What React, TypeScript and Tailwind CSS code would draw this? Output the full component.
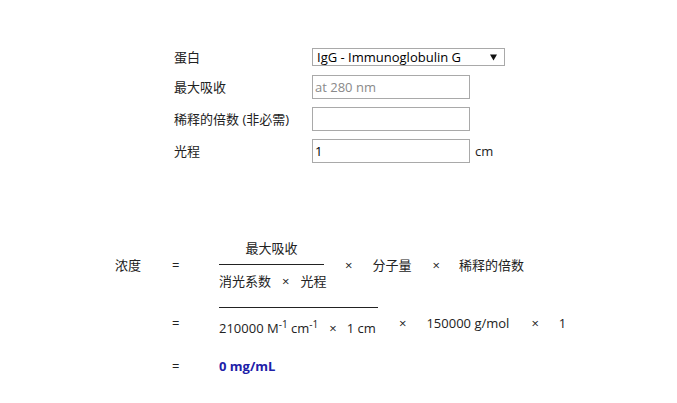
import React from "react";

export default function App() {
  return (
    <div className="w-[677px] h-[403px] bg-white font-['Open_Sans','Noto_Sans_CJK_SC',sans-serif] text-[13px] leading-[18px] text-[#222]">
      <div className="pt-[43px] pl-[174px]">
        <div className="flex items-center h-[28px]">
          <div className="w-[138px]">蛋白</div>
          <div className="w-[193px] h-[18px] border border-[#a9a9a9] flex items-center justify-between pl-[4px] pr-[7px] text-black">
            <span>IgG - Immunoglobulin G</span>
            <svg width="7" height="7" viewBox="0 0 7 7" className="block">
              <polygon points="0,0.5 7,0.5 3.5,6.5" fill="#111" />
            </svg>
          </div>
        </div>
        <div className="flex items-center h-[32px]">
          <div className="w-[138px]">最大吸收</div>
          <input
            readOnly
            placeholder="at 280 nm"
            className="w-[158px] h-[24px] border border-[#a9a9a9] px-[2px] text-[13px] placeholder:text-[#8a8a8a] outline-none"
          />
        </div>
        <div className="flex items-center h-[32px]">
          <div className="w-[138px]">稀释的倍数 (非必需)</div>
          <input
            readOnly
            className="w-[158px] h-[24px] border border-[#a9a9a9] px-[2px] text-[13px] outline-none"
          />
        </div>
        <div className="flex items-center h-[32px]">
          <div className="w-[138px]">光程</div>
          <input
            readOnly
            value="1"
            className="w-[158px] h-[24px] border border-[#a9a9a9] px-[2px] text-[13px] text-black outline-none"
          />
          <span className="ml-[5px]">cm</span>
        </div>
      </div>

      <div className="mt-[72px] pl-[115px]">
        <div className="flex items-center">
          <div className="w-[57px]">浓度</div>
          <div className="w-[47px]">=</div>
          <div className="w-[105px] flex flex-col">
            <div className="h-[18px] text-center">最大吸收</div>
            <div className="mt-[7px] border-t border-[#222]" />
            <div className="mt-[7px] h-[18px] flex whitespace-nowrap">
              <span>消光系数</span>
              <span className="mx-[11px]">×</span>
              <span>光程</span>
            </div>
          </div>
          <span className="ml-[21px]">×</span>
          <span className="ml-[20px]">分子量</span>
          <span className="ml-[21px]">×</span>
          <span className="ml-[19px]">稀释的倍数</span>
        </div>

        <div className="flex items-start mt-[17px]">
          <div className="w-[57px]" />
          <div className="w-[47px] mt-[7px]">=</div>
          <div className="w-[159px] border-t border-[#222] pt-[11px] whitespace-nowrap flex">
            <span>
              210000 M<sup className="text-[10px]">-1</sup> cm<sup className="text-[10px]">-1</sup>
            </span>
            <span className="ml-[11px] mr-[10px]">×</span>
            <span>1 cm</span>
          </div>
          <span className="ml-[21px] mt-[7px]">×</span>
          <span className="ml-[20px] mt-[7px]">150000 g/mol</span>
          <span className="ml-[22px] mt-[7px]">×</span>
          <span className="ml-[20px] mt-[7px]">1</span>
        </div>

        <div className="flex items-center mt-[20px]">
          <div className="w-[57px]" />
          <div className="w-[47px]">=</div>
          <div className="font-bold text-[#2020a8]">0 mg/mL</div>
        </div>
      </div>
    </div>
  );
}
